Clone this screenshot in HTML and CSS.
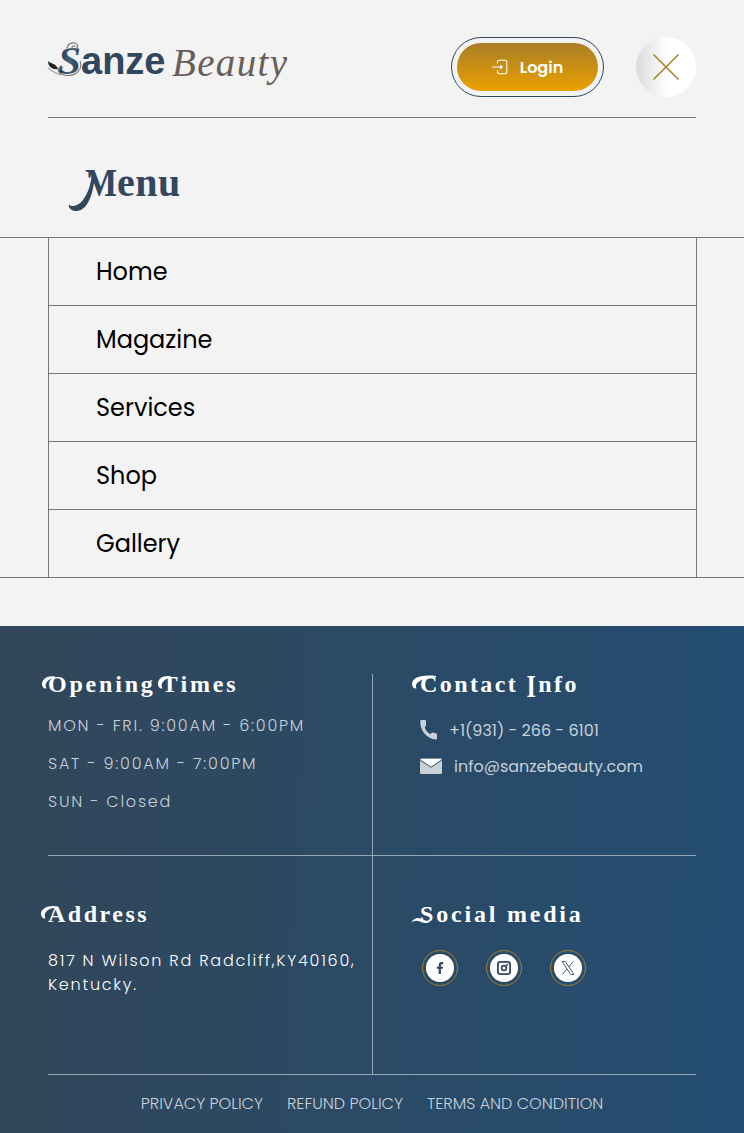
FILE: index.html
```html
<!DOCTYPE html>
<html lang="en">
<head>
<meta charset="utf-8">
<title>Sanze Beauty</title>
<link rel="stylesheet" href="styles.css">
</head>
<body>
<header class="header">
  <a class="logo">
    <svg width="244" height="60" viewBox="0 0 244 60" role="img" aria-label="Sanze Beauty">
      <defs><linearGradient id="steel" x1="0" x2="1"><stop offset="0" stop-color="#1f3142"/><stop offset=".5" stop-color="#41617c"/><stop offset="1" stop-color="#24384b"/></linearGradient></defs>
      <text class="logo-s" x="10" y="37">S</text>
      <g fill="none" stroke="#75736f" stroke-width="1.100">
        <path d="M19 11C20 5 29 4 29.500 9C30 13 24.500 14 24 11C23.800 8.500 27 8 27 10"/>
        <path d="M15 31C12 28 9 32 11 35C14 39 22 39.500 27 37C32 34 34 29 32 24"/>
        <path d="M0 31C5 35 9 37 14 38" stroke="#9aa5ad"/>
      </g>
      <path d="M0 24C3 27 8 26 10 32C5 33 0 30 0 24Z" fill="#1f2524"/>
      <text class="logo-sanze" x="33" y="37">anze</text>
      <text class="logo-beauty" x="124" y="39" textLength="115">Beauty</text>
    </svg>
  </a>
  <div class="actions">
    <button class="login"><span class="login-fill">
      <svg width="16" height="16" viewBox="0 0 16 16" fill="none" stroke="#fff" stroke-width="1.100" stroke-linecap="round" stroke-linejoin="round"><path d="M5.500 4V3Q5.500 1.200 7.300 1.200H13Q14.800 1.200 14.800 3V13Q14.800 14.800 13 14.800H7.300Q5.500 14.800 5.500 13V11.500M.7 8H9.700"/><path d="M8.500 6.500L10.300 8L8.500 9.500Z" fill="#fff"/></svg>
      <span>Login</span></span></button>
    <button class="close" aria-label="Close menu"><svg width="28" height="28" viewBox="0 0 28 28" fill="none" stroke="#a97e27" stroke-width="1.500"><path d="M1.500 1.500L26.500 26.500M26.500 1.500L1.500 26.500"/></svg></button>
  </div>
</header>
<h1 class="title"><span class="title-m">M</span>enu<svg class="swash-menu" width="36" height="46" viewBox="0 0 36 46" fill="#30475e"><path d="M1 37.500C5 41 11 38 15 33C20 26 23.500 17 24 4L26.500 7C26.500 20 22 43 9 44C4 44.500 0 41 1 37.500Z"/></svg></h1>
<nav class="menu">
  <ul class="menu-list">
    <li>Home</li><li>Magazine</li><li>Services</li><li>Shop</li><li>Gallery</li>
  </ul>
</nav>
<footer class="footer">
  <div class="grid">
    <section class="cell">
      <h2 class="h-opening"><span class="swash-word">O<svg class="swash" width="16" height="18" viewBox="0 0 16 18"><path d="M14 1.500C7 0 1 4 1 9C1 12 3 14 5.500 13.500C3 9 6 4 14 2.500Z"/></svg></span>pening<span class="swash-word times">T<svg class="swash swash-t" width="16" height="18" viewBox="0 0 16 18"><path d="M14 1.500C7 0 1 3 1 9C1 12 3 14 5.500 13.500C3 9 6 4 14 2.500Z"/></svg></span>imes</h2>
      <p class="hours">MON - FRI. 9:00AM - 6:00PM</p>
      <p class="hours">SAT - 9:00AM - 7:00PM</p>
      <p class="hours">SUN - Closed</p>
    </section>
    <section class="cell right">
      <h2 class="h-contact"><span class="swash-word">C<svg class="swash swash-c" width="24" height="18" viewBox="0 0 24 18"><path d="M24 1C11-.5 0 2 0 9C0 12 2 14 4.500 13.500C2 8 8 3 24 2.400Z"/></svg></span>ontact <span class="tall-i">I</span>nfo</h2>
      <p class="contact phone"><svg width="18" height="22" viewBox="0 0 18 22" fill="#c8d0d8"><path d="M1.500 1H5Q6 1 6 2V6.500Q6 7.500 5 7.800L4.700 8C5.500 11.500 8 14 10.500 15.200L11.300 13.900Q11.700 13.300 12.700 13.500L16 14.300Q17 14.600 17 15.500V19.500Q17 20.500 15.800 20.500C7 20 0 12 .2 2.300Q.3 1 1.500 1Z"/></svg><span>+1(931) - 266 - 6101</span></p>
      <p class="contact"><svg width="22" height="17" viewBox="0 0 22 17"><rect y=".5" width="22" height="15.500" rx="1.200" fill="#c8d0d8"/><path d="M.7 1H21.300L11 8.500Z" fill="#fff"/><path d="M0 2L11 9.200L22 2" fill="none" stroke="#30475e" stroke-width=".9"/></svg><span>info@sanzebeauty.com</span></p>
    </section>
    <section class="cell lower">
      <h2><span class="swash-word">A<svg class="swash" width="18" height="18" viewBox="0 0 18 18"><path d="M17 1.500C8-.5 0 3 0 9C0 12 2 14 4.500 13.500C2 8 6 3 17 2.500Z"/></svg></span>ddress</h2>
      <p class="address">817 N Wilson Rd Radcliff,KY40160,<br>Kentucky.</p>
    </section>
    <section class="cell right lower">
      <h2 class="h-social"><span class="swash-word">S<svg class="swash swash-s" width="21" height="8" viewBox="0 0 21 8"><path d="M0 5.500C4 0 8 .3 12 2.500Q16 5.500 19 4.200C17 7 13 6.300 9 4.500Q4 2.800 0 5.500Z"/></svg></span>ocial media</h2>
      <div class="social">
        <a class="ring"><svg width="28" height="28" viewBox="0 0 28 28"><circle cx="14" cy="14" r="14" fill="#fff"/><path d="M12.700 20V14.800H10.800V12.700H12.700V11Q12.700 8 15.500 8H17.200V10.200H16Q14.900 10.200 14.900 11.500V12.700H17.100L16.700 14.800H14.900V20Z" fill="#30475e"/></svg></a>
        <a class="ring"><svg width="28" height="28" viewBox="0 0 28 28" fill="none" stroke="#30475e"><circle cx="14" cy="14" r="14" fill="#fff" stroke="none"/><rect x="7.900" y="7.900" width="12.200" height="12.200" rx="2.500" stroke-width="1.800"/><circle cx="14" cy="14" r="2.400" stroke-width="1.700"/><circle cx="17.200" cy="10.800" r="1" fill="#30475e" stroke="none"/></svg></a>
        <a class="ring"><svg width="28" height="28" viewBox="0 0 28 28" fill="none" stroke="#30475e" stroke-width=".9"><circle cx="14" cy="14" r="14" fill="#fff" stroke="none"/><path d="M8 7.500H11.300L20 20.500H16.700ZM19.300 7.500L14.700 13M13 15L8.300 20.500"/></svg></a>
      </div>
    </section>
  </div>
  <div class="legal"><a>PRIVACY POLICY</a><a>REFUND POLICY</a><a>TERMS AND CONDITION</a></div>
</footer>
</body>
</html>
```
FILE: styles.css
```css
* { box-sizing: border-box; }
body { margin: 0; background: #f3f3f3; color: #000; font-family: Poppins, Inter, sans-serif; height: 1133px; display: flex; flex-direction: column; overflow: hidden; }
h1, h2, p, ul { margin: 0; padding: 0; }
button { border: 0; padding: 0; font: inherit; }
.header { margin: 0 48px; height: 118px; border-bottom: 1px solid #757779; display: flex; justify-content: space-between; padding-top: 37px; }
.logo svg { display: block; overflow: visible; }
.logo-s { font: italic bold 41px "Liberation Serif", serif; fill: url(#steel); }
.logo-sanze { font: bold 38px "Liberation Sans", sans-serif; fill: #30475e; }
.logo-beauty { font: italic 39px "Monotype Corsiva", "Apple Chancery", "URW Chancery L", Z003, "Liberation Serif", serif; fill: #6b5e58; }
.actions { display: flex; gap: 32px; }
.login { width: 153px; height: 60px; border: 1px solid #30475e; border-radius: 30px; padding: 5px; background: none; }
.login-fill { height: 48px; border-radius: 24px; background: linear-gradient(#a97e27, #eba000); color: #fff; display: flex; align-items: center; justify-content: center; gap: 12px; font-size: 16px; font-weight: 600; }
.close { width: 60px; height: 60px; border-radius: 50%; background: linear-gradient(90deg, #dcdcdc, #fff 55%); display: flex; align-items: center; justify-content: center; }
.title { position: relative; height: 119px; padding: 42px 0 0 85px; font: bold 40px/46px "Liberation Serif", serif; color: #30475e; letter-spacing: .5px; }
.title-m { display: inline-block; width: 32px; transform: scaleX(.85); transform-origin: 0 0; clip-path: polygon(0 0, 130% 0, 130% 100%, 38% 100%, 23% 38%, 0 38%); }
.swash-menu { position: absolute; left: 68px; top: 49px; }
.menu { height: 341px; border: solid #757779; border-width: 1px 0; padding: 0 47px 0 48px; }
.menu-list { list-style: none; border: solid #757779; border-width: 0 1px; }
.menu-list li { height: 68px; padding-left: 47px; font-size: 24px; line-height: 68px; border-bottom: 1px solid #757779; }
.menu-list li:last-child { border: 0; height: 67px; }
.footer { margin-top: 48px; flex: 1; padding: 48px 48px 0; background: linear-gradient(93deg, #32465a, #2b4a64 45%, #264c6e 85%, #244e73); color: #fff; }
.grid { display: grid; grid-template-columns: 325px 323px; grid-template-rows: 181px 219px; border-bottom: 1px solid #96a5b2; }
.cell { border-right: 1px solid #96a5b2; }
.right { border-right: 0; padding-left: 47px; }
.lower { border-top: 1px solid #96a5b2; padding-top: 48px; }
.footer h2 { font: bold 24px/24px "Liberation Serif", serif; letter-spacing: 2.500px; height: 24px; white-space: nowrap; margin-top: -2px; }
.swash-word { position: relative; }
.times { margin-left: 6px; }
.swash { position: absolute; left: -7px; top: 4px; fill: #fff; }
.swash-t { left: -5px; }
.swash-c { left: -8px; }
.swash-s { top: 16px; left: -9px; }
.tall-i { display: inline-block; transform: scaleY(1.350); transform-origin: 50% 20%; }
.hours { font-weight: 300; font-size: 16px; line-height: 24px; letter-spacing: 1.760px; color: #c8d0d8; margin-bottom: 14px; white-space: nowrap; }
.footer .h-opening { margin-bottom: 18px; letter-spacing: 2.800px; }
.footer .h-contact { margin-bottom: 23px; letter-spacing: 2.400px; }
.footer .h-social { letter-spacing: 2.800px; }
.contact { height: 24px; margin-bottom: 12px; display: flex; align-items: center; gap: 12px; font-size: 16px; line-height: 24px; color: #c8d0d8; }
.contact svg { margin-bottom: 2px; }
.phone { gap: 11px; }
.address { margin-top: 23px; font-weight: 300; font-size: 16px; line-height: 24px; letter-spacing: 1.760px; white-space: nowrap; }
.social { display: flex; gap: 28px; margin: 24px 0 0 2px; }
.ring { width: 36px; height: 36px; border: 1px solid #a97e27; border-radius: 50%; display: flex; align-items: center; justify-content: center; }
.legal { display: flex; justify-content: center; gap: 24px; padding-top: 17px; font-weight: 300; font-size: 16px; line-height: 24px; color: #c8d0d8; white-space: nowrap; }
```
